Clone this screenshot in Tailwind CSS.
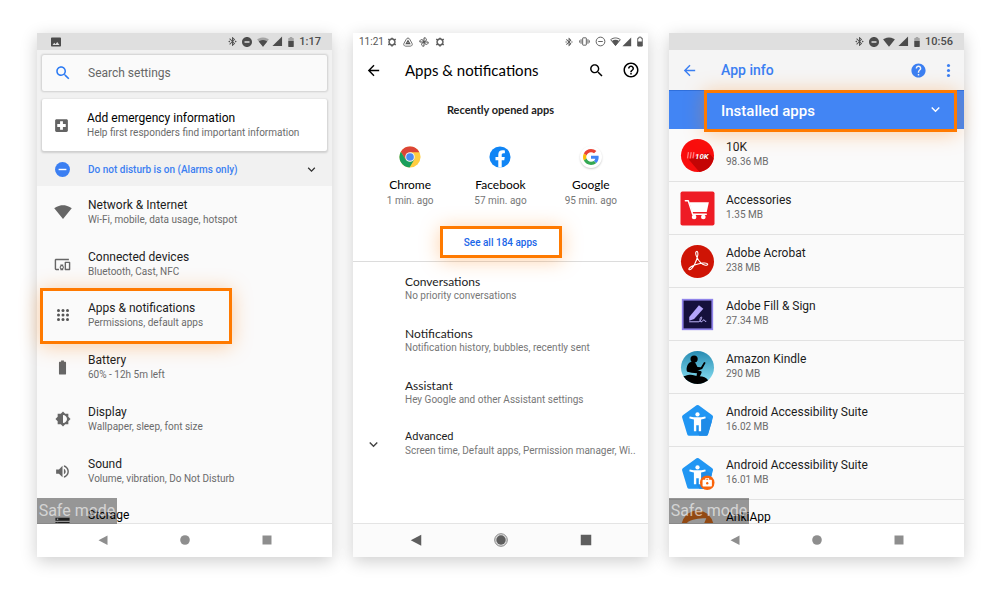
<!DOCTYPE html>
<html lang="en">
<head>
    <meta charset="UTF-8">
    <meta name="viewport" content="width=device-width, initial-scale=1.0">
    <title>Apps &amp; notifications</title>
    <script src="https://cdn.jsdelivr.net/npm/@tailwindcss/browser@4"></script>
</head>
<body class="bg-white font-['Roboto',sans-serif] text-[#1c1c1c]">
    <!-- Shared icons -->
    <svg class="hidden">
        <symbol id="bluetooth" viewBox="0 0 24 24"><path d="M7 12l-2-2-2 2 2 2 2-2zm10.71-4.29L12 2h-1v7.59L6.41 5 5 6.41 10.59 12 5 17.59 6.41 19 11 14.41V22h1l5.71-5.71-4.3-4.29 4.3-4.29zM13 5.83l1.88 1.88L13 9.59V5.83zm1.88 10.46L13 18.17v-3.76l1.88 1.88zM19 10l-2 2 2 2 2-2-2-2z"/></symbol>
        <symbol id="dnd" viewBox="0 0 24 24"><path d="M12 2C6.48 2 2 6.48 2 12s4.48 10 10 10 10-4.48 10-10S17.52 2 12 2zm5 11.5H7v-3h10v3z"/></symbol>
        <symbol id="wifi" viewBox="0 0 24 24"><path d="M12.01 21.49L23.64 7c-.45-.34-4.93-4-11.64-4C5.28 3 .81 6.66.36 7l11.65 14.49z"/></symbol>
        <symbol id="wifi-mid" viewBox="0 0 24 24"><path opacity=".4" d="M12.01 21.49L23.64 7c-.45-.34-4.93-4-11.64-4C5.28 3 .81 6.66.36 7l11.65 14.49z"/><path d="M12.01 21.49L20.5 10.9C20.1 10.6 16.8 8 12 8s-8.1 2.6-8.5 2.9z"/></symbol>
        <symbol id="signal" viewBox="0 0 24 24"><path d="M1 22h21V1z"/></symbol>
        <symbol id="battery" viewBox="0 0 24 24"><path d="M15.67 4H14V2h-4v2H8.33C7.6 4 7 4.6 7 5.33v15.33C7 21.4 7.6 22 8.33 22h7.33c.74 0 1.34-.6 1.34-1.33V5.33C17 4.6 16.4 4 15.67 4z"/></symbol>
        <symbol id="battery-mid" viewBox="0 0 12 24"><path opacity=".4" d="M10.500 4H8.500V2h-5v2h-2C1 4 .5 4.500.5 5v5h11V5c0-.5-.5-1-1-1z"/><path d="M.5 10v11c0 .5.5 1 1 1h9c.5 0 1-.5 1-1V10z"/></symbol>
        <symbol id="search" viewBox="0 0 24 24"><path d="M15.5 14h-.79l-.28-.27C15.41 12.59 16 11.11 16 9.5 16 5.91 13.09 3 9.5 3S3 5.91 3 9.5 5.91 16 9.5 16c1.61 0 3.09-.59 4.23-1.57l.27.28v.79l5 4.99L20.49 19l-4.99-5zm-6 0C7.01 14 5 11.99 5 9.5S7.01 5 9.5 5 14 7.01 14 9.5 11.99 14 9.5 14z"/></symbol>
        <symbol id="chevron" viewBox="0 0 24 24"><path d="M16.59 8.59L12 13.17 7.41 8.59 6 10l6 6 6-6z"/></symbol>
        <symbol id="arrow" viewBox="0 0 24 24"><path d="M20 11H7.83l5.59-5.59L12 4l-8 8 8 8 1.41-1.41L7.83 13H20v-2z"/></symbol>
        <symbol id="gear" viewBox="0 0 24 24"><path fill="none" stroke="currentColor" stroke-width="3" d="M8.500 5h7l4 7-4 7h-7l-4-7z"/><path d="M10 1.500h4V5h-4zM10 19h4v3.500h-4zM2 7l2-3.500 3.500 2-2 3.500zM22 7l-2-3.500-3.500 2 2 3.500zM2 17l2 3.500 3.500-2-2-3.500zM22 17l-2 3.500-3.500-2 2-3.500z"/></symbol>
        <symbol id="a11y" viewBox="0 0 36 36"><path fill="#2196f3" d="M17 2.400a2 2 0 0 1 2.200 0l14 10.200a2 2 0 0 1 .7 2.200l-5.200 17.500a2 2 0 0 1-1.900 1.400H9.400a2 2 0 0 1-1.900-1.400L2.200 14.800a2 2 0 0 1 .7-2.200z"/><path fill="#1e8be8" d="M27 15l5.800 4-4 13.300a2 2 0 0 1-2 1.400H20L17 29l5-12z"/><circle cx="18" cy="11.800" r="2.200" fill="#fff"/><path fill="#fff" d="M10 13.800c5 1.300 11 1.300 16 0l.5 2c-1.700.6-3.300 1-4.800 1.200V29h-2.400v-6h-2.600v6h-2.400V17c-1.500-.2-3.100-.6-4.800-1.200z"/></symbol>
        <symbol id="nav-back" viewBox="0 0 12 12"><path d="M10.500 1.500v9.500L1.500 6.200z"/></symbol>
        <symbol id="nav-home" viewBox="0 0 12 12"><circle cx="6" cy="6" r="4.800"/></symbol>
        <symbol id="nav-recent" viewBox="0 0 12 12"><path d="M1.500 1.500h9v9h-9z"/></symbol>
    </svg>

    <main class="grid h-screen grid-cols-3 gap-[21px] pt-[33px] pr-9 pb-8 pl-[37px]">
        <!-- Settings -->
        <section class="relative flex min-h-0 flex-col bg-[#fafafa] shadow-[0_4px_16px_rgba(0,0,0,0.2)]">
            <div class="flex h-[17px] shrink-0 items-center bg-[#dfdfdf] pr-[11px] pl-[13px] text-[#4c4c4c]">
                <svg class="size-3 fill-current" viewBox="0 0 24 24"><path d="M22 19V5c0-1.100-.9-2-2-2H4c-1.100 0-2 .9-2 2v14c0 1.100.9 2 2 2h16c1.100 0 2-.9 2-2zM8.500 13.500l2.500 3.010L14.500 12l4.500 6H5l3.500-4.500z"/></svg>
                <div class="ml-auto flex items-center gap-[3px]">
                    <svg class="size-[11px] fill-current"><use href="#bluetooth"/></svg>
                    <svg class="size-3 fill-current"><use href="#dnd"/></svg>
                    <svg class="ml-px size-3 fill-current"><use href="#wifi-mid"/></svg>
                    <svg class="size-[11px] fill-current"><use href="#signal"/></svg>
                    <svg class="mx-[2px] h-3 w-[6px] fill-current"><use href="#battery-mid"/></svg>
                    <span class="text-[11px] font-medium leading-none">1:17</span>
                </div>
            </div>

            <div class="shrink-0 bg-[#f1f1f1] pt-[5px]">
                <label class="mx-[5px] flex h-9 items-center gap-[5px] rounded-[2px] bg-[#fafafa] shadow-[0_0_2px_1px_rgba(0,0,0,0.14)]">
                    <span class="flex w-[41px] justify-center">
                        <svg class="size-[18px] fill-[#2b7af3]"><use href="#search"/></svg>
                    </span>
                    <input type="search" placeholder="Search settings" class="min-w-0 flex-1 bg-transparent text-xs outline-none placeholder:text-[#666]">
                </label>
                <a href="#" class="mx-[5px] mt-2 flex h-[52px] items-center gap-1 rounded-[2px] bg-white shadow-[0_1px_2px_1px_rgba(0,0,0,0.14)]">
                    <span class="flex w-[41px] justify-center pr-[3px]">
                        <svg class="size-[17px] fill-[#636363]" viewBox="0 0 24 24"><path d="M19 3H5c-1.100 0-2 .9-2 2v14c0 1.100.9 2 2 2h14c1.100 0 2-.9 2-2V5c0-1.100-.9-2-2-2zm-1 11h-4v4h-4v-4H6v-4h4V6h4v4h4v4z"/></svg>
                    </span>
                    <span>
                        <span class="block text-xs leading-[15px] text-black">Add emergency information</span>
                        <span class="block text-[10px] leading-[14px] text-[#6b6b6b]">Help first responders find important information</span>
                    </span>
                </a>
                <button class="mt-px flex h-[34px] w-full items-center pr-[13px] text-left">
                    <span class="flex w-[51px] justify-center">
                        <svg class="size-[17px]" viewBox="0 0 24 24"><circle cx="12" cy="12" r="10.500" fill="#3b7ff2"/><path fill="#fff" d="M6.500 11h11v2h-11z"/></svg>
                    </span>
                    <span class="text-[10px] font-medium text-[#3b7ff2]">Do not disturb is on (Alarms only)</span>
                    <svg class="ml-auto size-[15px] fill-[#333]"><use href="#chevron"/></svg>
                </button>
            </div>

            <nav class="min-h-0 flex-1 overflow-x-visible overflow-y-clip">
                <a href="#" class="flex h-[52px] items-center">
                    <span class="flex w-[51px] justify-center"><svg class="size-[18px] fill-[#666]"><use href="#wifi"/></svg></span>
                    <span>
                        <span class="block text-xs leading-[15px]">Network &amp; Internet</span>
                        <span class="block text-[10px] leading-[14px] text-[#6b6b6b]">Wi-Fi, mobile, data usage, hotspot</span>
                    </span>
                </a>
                <a href="#" class="flex h-[52px] items-center">
                    <span class="flex w-[51px] justify-center"><svg class="size-[17px] fill-[#666]" viewBox="0 0 24 24"><path d="M3 6h18V4H3c-1.100 0-2 .9-2 2v12c0 1.100.9 2 2 2h4v-2H3V6zm10 6H9v1.780c-.61.55-1 1.330-1 2.220s.39 1.670 1 2.220V20h4v-1.780c.61-.55 1-1.340 1-2.220s-.39-1.670-1-2.220V12zm-2 5.500c-.83 0-1.500-.67-1.500-1.500s.67-1.500 1.500-1.500 1.500.67 1.500 1.500-.67 1.500-1.500 1.500zM22 8h-6c-.5 0-1 .5-1 1v10c0 .5.5 1 1 1h6c.5 0 1-.5 1-1V9c0-.5-.5-1-1-1zm-1 10h-4v-8h4v8z"/></svg></span>
                    <span>
                        <span class="block text-xs leading-[15px]">Connected devices</span>
                        <span class="block text-[10px] leading-[14px] text-[#6b6b6b]">Bluetooth, Cast, NFC</span>
                    </span>
                </a>
                <a href="#" class="relative flex h-[52px] items-center pb-[2px]">
                    <span class="absolute -inset-y-[2px] left-[3px] w-48 border-3 border-[#ff7a00] shadow-[0_2px_20px_rgba(255,122,0,0.35)]"></span>
                    <span class="flex w-[51px] justify-center"><svg class="size-[18px] fill-[#555]" viewBox="0 0 24 24"><circle cx="6" cy="6" r="2"/><circle cx="12" cy="6" r="2"/><circle cx="18" cy="6" r="2"/><circle cx="6" cy="12" r="2"/><circle cx="12" cy="12" r="2"/><circle cx="18" cy="12" r="2"/><circle cx="6" cy="18" r="2"/><circle cx="12" cy="18" r="2"/><circle cx="18" cy="18" r="2"/></svg></span>
                    <span>
                        <span class="block text-xs leading-[15px]">Apps &amp; notifications</span>
                        <span class="block text-[10px] leading-[14px] text-[#6b6b6b]">Permissions, default apps</span>
                    </span>
                </a>
                <a href="#" class="flex h-[52px] items-center pb-[2px]">
                    <span class="flex w-[51px] justify-center"><svg class="size-[17px] fill-[#666]"><use href="#battery"/></svg></span>
                    <span>
                        <span class="block text-xs leading-[15px]">Battery</span>
                        <span class="block text-[10px] leading-[14px] text-[#6b6b6b]">60% - 12h 5m left</span>
                    </span>
                </a>
                <a href="#" class="flex h-[52px] items-center pb-[2px]">
                    <span class="flex w-[51px] justify-center"><svg class="size-4 fill-[#666]" viewBox="0 0 24 24"><path d="M20 15.310L23.310 12 20 8.690V4h-4.690L12 .69 8.690 4H4v4.690L.69 12 4 15.310V20h4.690L12 23.310 15.310 20H20v-4.690zM12 18V6c3.310 0 6 2.690 6 6s-2.690 6-6 6z"/></svg></span>
                    <span>
                        <span class="block text-xs leading-[15px]">Display</span>
                        <span class="block text-[10px] leading-[14px] text-[#6b6b6b]">Wallpaper, sleep, font size</span>
                    </span>
                </a>
                <a href="#" class="flex h-[52px] items-center pb-[2px]">
                    <span class="flex w-[51px] justify-center"><svg class="size-[17px] fill-[#666]" viewBox="0 0 24 24"><path d="M3 9v6h4l5 5V4L7 9H3zm13.500 3c0-1.770-1.020-3.290-2.500-4.030v8.050c1.480-.73 2.500-2.250 2.500-4.020zM14 3.230v2.060c2.890.86 5 3.540 5 6.710s-2.110 5.850-5 6.710v2.060c4.010-.91 7-4.490 7-8.770s-2.990-7.860-7-8.770z"/></svg></span>
                    <span>
                        <span class="block text-xs leading-[15px]">Sound</span>
                        <span class="block text-[10px] leading-[14px] text-[#6b6b6b]">Volume, vibration, Do Not Disturb</span>
                    </span>
                </a>
                <a href="#" class="flex h-[52px] items-center pb-[2px]">
                    <span class="flex w-[51px] justify-center"><svg class="size-[17px] fill-[#333]" viewBox="0 0 24 24"><path d="M2 20h20v-4H2v4zm2-3h2v2H4v-2zM2 4v4h20V4H2zm4 3H4V5h2v2zm-4 7h20v-4H2v4zm2-3h2v2H4v-2z"/></svg></span>
                    <span class="pb-4 text-xs leading-[15px] text-black">Storage</span>
                </a>
            </nav>

            <div class="relative flex h-[34px] shrink-0 items-center justify-center gap-[70px] border-t border-[#e4e4e4] bg-white pb-px text-[#8e8e8e]">
                <span class="absolute bottom-full left-0 w-20 bg-black/40 text-center text-base leading-[26px] whitespace-nowrap text-white/60">Safe mode</span>
                <button aria-label="Back"><svg class="size-3 fill-current"><use href="#nav-back"/></svg></button>
                <button aria-label="Home"><svg class="size-3 fill-current"><use href="#nav-home"/></svg></button>
                <button aria-label="Recents"><svg class="size-3 fill-current"><use href="#nav-recent"/></svg></button>
            </div>
        </section>

        <!-- Apps & notifications -->
        <section class="flex min-h-0 flex-col bg-white shadow-[0_4px_16px_rgba(0,0,0,0.2)]">
            <div class="flex h-[17px] shrink-0 items-center pr-1 pl-[6px] text-[#555]">
                <span class="mr-[3px] text-[10px] leading-none">11:21</span>
                <div class="flex items-center gap-[6px]">
                    <svg class="size-[10px] fill-current"><use href="#gear"/></svg>
                    <svg class="size-[10px]" viewBox="0 0 24 24" fill="none" stroke="currentColor" stroke-width="2"><path d="M8 5a4.500 4.500 0 0 1 8 0l5.500 10a4.500 4.500 0 0 1-4 7h-11a4.500 4.500 0 0 1-4-7z"/><path stroke-width="3" d="M12 9l4 7H8z"/></svg>
                    <svg class="size-[10px]" viewBox="0 0 24 24" fill="none" stroke="currentColor" stroke-width="2.400"><path d="M12 12V2c5-1 7 4 5 7zM12 12h10c1 5-4 7-7 5zM12 12v10c-5 1-7-4-5-7zM12 12H2C1 7 6 5 9 7z"/></svg>
                    <svg class="size-[10px] fill-current"><use href="#gear"/></svg>
                </div>
                <div class="ml-auto flex items-center">
                    <svg class="mr-[5px] size-[10px] fill-current"><use href="#bluetooth"/></svg>
                    <svg class="mr-[5px] size-[11px]" viewBox="0 0 24 24" fill="none" stroke="currentColor" stroke-width="2"><rect x="8" y="4" width="8" height="16" rx="1"/><path d="M4.500 7v10M19.500 7v10M1.500 9.500v5M22.500 9.500v5"/></svg>
                    <svg class="mr-[4px] size-[11px]" viewBox="0 0 24 24" fill="none" stroke="currentColor" stroke-width="2"><circle cx="12" cy="12" r="9.500"/><path d="M7 12h10"/></svg>
                    <svg class="mr-px size-[11px]" viewBox="0 0 24 24"><path fill="none" stroke="currentColor" stroke-width="2" d="M1.500 8C8 3 16 3 22.500 8L12 21z"/><path fill="currentColor" d="M12 21.500L20 11c-5-3.500-11-3.500-16 0z"/></svg>
                    <svg class="mr-[4px] size-[10px] fill-current"><use href="#signal"/></svg>
                    <svg class="h-[11px] w-2" viewBox="0 0 16 24"><path fill="none" stroke="currentColor" stroke-width="2" d="M3 5h2.500V2.500h5V5H13v17H3z"/><path fill="currentColor" d="M3 12h10v10H3z"/></svg>
                </div>
            </div>

            <header class="flex h-10 shrink-0 items-center pr-2 pl-3 text-black">
                <button aria-label="Navigate up"><svg class="size-[17px] fill-current"><use href="#arrow"/></svg></button>
                <h1 class="ml-[23px] font-['Lato',sans-serif] text-[15px]">Apps &amp; notifications</h1>
                <button aria-label="Search" class="ml-auto"><svg class="size-[17px] fill-current"><use href="#search"/></svg></button>
                <button aria-label="Help" class="ml-[17px]"><svg class="size-[18px] fill-current" viewBox="0 0 24 24"><path d="M11 18h2v-2h-2v2zm1-16C6.480 2 2 6.480 2 12s4.480 10 10 10 10-4.480 10-10S17.520 2 12 2zm0 18c-4.410 0-8-3.590-8-8s3.590-8 8-8 8 3.590 8 8-3.590 8-8 8zm0-14c-2.210 0-4 1.790-4 4h2c0-1.100.9-2 2-2s2 .9 2 2c0 2-3 1.750-3 5h2c0-2.250 3-2.500 3-5 0-2.210-1.790-4-4-4z"/></svg></button>
            </header>

            <div class="flex shrink-0 flex-col items-center border-b border-[#dcdcdc] pt-[13px] pb-[3px]">
                <h2 class="font-['Lato',sans-serif] text-[11px] leading-[14px] font-bold text-[#222]">Recently opened apps</h2>
                <div class="mt-[29px] grid w-full grid-cols-3 px-3 text-center">
                    <a href="#" class="flex flex-col items-center">
                        <svg class="size-[22px]" viewBox="0 0 48 48"><circle cx="24" cy="24" r="23" fill="#ffcd41"/><path fill="#dc4437" d="M24 1A23 23 0 0 0 4 12.600L14.500 30 24 13.500h20.500A23 23 0 0 0 24 1z"/><path fill="#1a9f5c" d="M4 12.600A23 23 0 0 0 23 47l10.500-17.500L24 34.500l-9.500-5z"/><circle cx="24" cy="24" r="10.500" fill="#f1f1f1"/><circle cx="24" cy="24" r="8.300" fill="#4a8af4"/></svg>
                        <span class="mt-[9px] font-['Lato',sans-serif] text-xs leading-4 text-black">Chrome</span>
                        <span class="text-[10px] leading-4 text-[#777]">1 min. ago</span>
                    </a>
                    <a href="#" class="flex flex-col items-center">
                        <svg class="size-[22px]" viewBox="0 0 24 24"><circle cx="12" cy="12" r="11.500" fill="#1085f5"/><path fill="#fff" d="M10.130 23.300v-7.740H7.080v-3.490h3.040V9.410c0-3.020 1.800-4.700 4.540-4.700 1.310 0 2.680.24 2.680.24v2.970h-1.500c-1.500 0-1.960.93-1.960 1.890v2.260h3.320l-.53 3.490h-2.800v7.740c-1.250.3-2.500.3-3.740 0z"/></svg>
                        <span class="mt-[9px] font-['Lato',sans-serif] text-xs leading-4 text-black">Facebook</span>
                        <span class="text-[10px] leading-4 text-[#777]">57 min. ago</span>
                    </a>
                    <a href="#" class="flex flex-col items-center">
                        <span class="flex size-[22px] items-center justify-center rounded-full bg-white shadow-[0_1px_2px_rgba(0,0,0,0.2)]">
                            <svg class="size-4" viewBox="0 0 48 48"><path fill="#ea4335" d="M24 9.500c3.540 0 6.710 1.220 9.210 3.600l6.850-6.850C35.900 2.380 30.470 0 24 0 14.620 0 6.510 5.380 2.560 13.220l7.980 6.190C12.430 13.720 17.740 9.500 24 9.500z"/><path fill="#4285f4" d="M46.980 24.550c0-1.570-.15-3.090-.38-4.550H24v9.020h12.940c-.58 2.960-2.260 5.480-4.780 7.180l7.730 6c4.510-4.180 7.090-10.360 7.090-17.650z"/><path fill="#fbbc05" d="M10.530 28.590c-.48-1.450-.76-2.990-.76-4.590s.27-3.140.76-4.590l-7.980-6.190C.92 16.460 0 20.120 0 24c0 3.880.92 7.540 2.560 10.780l7.970-6.190z"/><path fill="#34a853" d="M24 48c6.480 0 11.930-2.130 15.890-5.810l-7.730-6c-2.150 1.450-4.920 2.300-8.160 2.300-6.260 0-11.570-4.220-13.470-9.910l-7.980 6.190C6.510 42.620 14.620 48 24 48z"/></svg>
                        </span>
                        <span class="mt-[9px] font-['Lato',sans-serif] text-xs leading-4 text-black">Google</span>
                        <span class="text-[10px] leading-4 text-[#777]">95 min. ago</span>
                    </a>
                </div>
                <button class="mt-[17px] h-8 w-[122px] border-3 border-[#ff7a00] text-[10px] font-medium text-[#1a66e8] shadow-[0_2px_20px_rgba(255,122,0,0.35)]">See all 184 apps</button>
            </div>

            <nav class="min-h-0 flex-1 overflow-hidden">
                <a href="#" class="flex h-[52px] flex-col justify-center pl-[52px]">
                    <span class="font-['Lato',sans-serif] text-xs leading-[15px]">Conversations</span>
                    <span class="text-[10px] leading-[14px] text-[#777]">No priority conversations</span>
                </a>
                <a href="#" class="flex h-[52px] flex-col justify-center pl-[52px]">
                    <span class="font-['Lato',sans-serif] text-xs leading-[15px]">Notifications</span>
                    <span class="text-[10px] leading-[14px] text-[#777]">Notification history, bubbles, recently sent</span>
                </a>
                <a href="#" class="flex h-[52px] flex-col justify-center pl-[52px]">
                    <span class="font-['Lato',sans-serif] text-xs leading-[15px]">Assistant</span>
                    <span class="text-[10px] leading-[14px] text-[#777]">Hey Google and other Assistant settings</span>
                </a>
                <button class="flex h-[52px] w-full items-center pl-3 text-left">
                    <svg class="mr-[23px] size-[17px] shrink-0 fill-[#444]"><use href="#chevron"/></svg>
                    <span>
                        <span class="block text-[11px] leading-[14px]">Advanced</span>
                        <span class="block text-[10px] leading-[14px] whitespace-nowrap text-[#777]">Screen time, Default apps, Permission manager, Wi..</span>
                    </span>
                </button>
            </nav>

            <div class="flex h-[34px] shrink-0 items-center justify-center gap-[71px] border-t border-[#e4e4e4] bg-[#fbfbfb] pb-px text-[#5e5e5e]">
                <button aria-label="Back"><svg class="size-[14px] fill-current"><use href="#nav-back"/></svg></button>
                <button aria-label="Home"><svg class="size-[14px]" viewBox="0 0 14 14"><circle cx="7" cy="7" r="6.300" fill="#ddd" stroke="#888"/><circle cx="7" cy="7" r="4.700" fill="#5e5e5e"/></svg></button>
                <button aria-label="Recents"><svg class="size-[14px] fill-current"><use href="#nav-recent"/></svg></button>
            </div>
        </section>

        <!-- App info -->
        <section class="flex min-h-0 flex-col bg-[#fafafa] shadow-[0_4px_16px_rgba(0,0,0,0.2)]">
            <div class="flex h-[17px] shrink-0 items-center justify-end gap-[3px] bg-[#dfdfdf] pr-[11px] text-[#4c4c4c]">
                <svg class="size-[11px] fill-current"><use href="#bluetooth"/></svg>
                <svg class="size-3 fill-current"><use href="#dnd"/></svg>
                <svg class="size-3 fill-current"><use href="#wifi"/></svg>
                <svg class="size-[11px] fill-current"><use href="#signal"/></svg>
                <svg class="mx-[2px] h-3 w-[6px] fill-current"><use href="#battery-mid"/></svg>
                <span class="text-[11px] font-medium leading-none">10:56</span>
            </div>

            <header class="flex h-10 shrink-0 items-center bg-[#f5f5f5] pr-[7px] pl-3 text-[#3b7ff2]">
                <button aria-label="Navigate up"><svg class="size-[17px] fill-current"><use href="#arrow"/></svg></button>
                <h1 class="ml-[23px] text-sm font-medium">App info</h1>
                <button aria-label="Help" class="ml-auto"><svg class="size-[17px] fill-current" viewBox="0 0 24 24"><path d="M12 2C6.480 2 2 6.480 2 12s4.480 10 10 10 10-4.480 10-10S17.520 2 12 2zm1 17h-2v-2h2v2zm2.070-7.750l-.9.92C13.450 12.900 13 13.500 13 15h-2v-.5c0-1.100.45-2.100 1.170-2.830l1.240-1.260c.37-.36.59-.86.59-1.410 0-1.100-.9-2-2-2s-2 .9-2 2H8c0-2.210 1.790-4 4-4s4 1.790 4 4c0 .88-.36 1.680-.93 2.250z"/></svg></button>
                <button aria-label="More options" class="ml-[13px]"><svg class="size-[17px] fill-current" viewBox="0 0 24 24"><circle cx="12" cy="5" r="2.200"/><circle cx="12" cy="12" r="2.200"/><circle cx="12" cy="19" r="2.200"/></svg></button>
            </header>

            <div class="relative z-10 h-[39px] shrink-0 border-t border-[#2f6fdc] bg-[#4285f4]">
                <div class="absolute -top-px right-[7px] -bottom-[3px] left-[35px] border-3 border-[#ff7a00] bg-[#4285f4] shadow-[0_2px_20px_rgba(255,122,0,0.35)]">
                    <select aria-label="Filter apps" class="h-full w-full appearance-none bg-transparent pl-[14px] text-[15px] font-medium text-white outline-none">
                        <option>Installed apps</option>
                        <option>All apps</option>
                    </select>
                    <svg class="pointer-events-none absolute top-2 right-[10px] size-[17px] fill-white"><use href="#chevron"/></svg>
                </div>
            </div>

            <ul class="min-h-0 flex-1 overflow-hidden">
                <li class="flex h-[53px] items-center gap-[11px] border-b border-[#e2e2e2] pl-[11px]">
                    <svg class="size-[35px]" viewBox="0 0 36 36"><circle cx="18" cy="18" r="17" fill="#f90d0d"/><path fill="#c40505" d="M29 15l5.600 5.500A17 17 0 0 1 20 34.900L9 22z"/><path stroke="#ff7d7d" stroke-width="1.300" d="M8.700 14.500l-1 6.500M11.500 14.500l-1 6.500M14.300 14.500l-1 6.500"/><text x="15.500" y="21.300" fill="#fff" font-size="8" font-weight="700" font-style="italic" font-family="Roboto, sans-serif">10K</text></svg>
                    <div class="pb-[2px]">
                        <p class="text-xs leading-[15px]">10K</p>
                        <p class="text-[10px] leading-[14px] text-[#6b6b6b]">98.36 MB</p>
                    </div>
                </li>
                <li class="flex h-[53px] items-center gap-[11px] border-b border-[#e2e2e2] pl-[11px]">
                    <svg class="size-[35px]" viewBox="0 0 36 36"><rect x=".5" y=".5" width="35" height="35" rx="2" fill="#ee1c25"/><path fill="#fff" d="M9.500 11.500h20.200L27.500 21.500H12.500z"/><path fill="none" stroke="#fff" stroke-width="1.500" stroke-linecap="round" stroke-linejoin="round" d="M5.500 10h3l4.500 14h14"/><circle cx="14.500" cy="26.700" r="2.400" fill="#fff"/><circle cx="24" cy="26.700" r="2.400" fill="#fff"/></svg>
                    <div class="pb-[2px]">
                        <p class="text-xs leading-[15px]">Accessories</p>
                        <p class="text-[10px] leading-[14px] text-[#6b6b6b]">1.35 MB</p>
                    </div>
                </li>
                <li class="flex h-[53px] items-center gap-[11px] border-b border-[#e2e2e2] pl-[11px]">
                    <svg class="size-[35px]" viewBox="0 0 36 36"><circle cx="18" cy="18" r="17" fill="#cf1405"/><path fill="none" stroke="#fff" stroke-width="1.100" stroke-linejoin="round" d="M16.300 8.500c1.200-2 2.500-.5 2 3-.8 5-4.800 14.500-8.300 15-2 .2-.8-3 5-5 5.500-1.800 13-3 13.500-.8.300 1.800-4.500 1.600-7.500-1.700-3-3.200-5.500-8.700-4.700-10.500z"/></svg>
                    <div class="pb-[2px]">
                        <p class="text-xs leading-[15px]">Adobe Acrobat</p>
                        <p class="text-[10px] leading-[14px] text-[#6b6b6b]">238 MB</p>
                    </div>
                </li>
                <li class="flex h-[53px] items-center gap-[11px] border-b border-[#e2e2e2] pl-[11px]">
                    <svg class="size-[35px]" viewBox="0 0 36 36"><rect x="2.800" y="2.800" width="30.400" height="30.400" fill="#15103c" stroke="#8f83ea" stroke-width="1.800"/><path fill="#b3a5fb" d="M9.500 20.500L19.500 8.500l4.500 3.500L14.500 22.500l-5 2z"/><path stroke="#c4baff" stroke-width="1" fill="none" d="M9.500 25.500h10c2-1 3.500-4.500 2.500-5s-2.500 4.500-.5 5 1.500-2 3-2 0 2 2.500 1.500"/></svg>
                    <div class="pb-[2px]">
                        <p class="text-xs leading-[15px]">Adobe Fill &amp; Sign</p>
                        <p class="text-[10px] leading-[14px] text-[#6b6b6b]">27.34 MB</p>
                    </div>
                </li>
                <li class="flex h-[53px] items-center gap-[11px] border-b border-[#e2e2e2] pl-[11px]">
                    <svg class="size-[35px]" viewBox="0 0 36 36"><defs><linearGradient id="sky" x2="0" y2="1"><stop offset="0" stop-color="#2488b0"/><stop offset="1" stop-color="#8fe6f7"/></linearGradient><clipPath id="disc"><circle cx="18" cy="18" r="17"/></clipPath></defs><g clip-path="url(#disc)"><path fill="url(#sky)" d="M0 0h36v36H0z"/><circle cx="14.500" cy="9.300" r="3.700"/><path d="M9.500 13c2.500-1.500 5.500-1 6.500.5l2 4 3.500.3 3.300-5.500 1.600.9-3.600 6.300-4.300 1.500-2-.2 4.500.7c1.300.3 1.500 1.300 1 2.300L19.500 29h-3l1-5-5.500-.5-4.500-1.200c-1.500-2-.5-7 2-9.300z"/><path d="M0 28.500c5-1.500 7-3 11-3 3 0 5 1.500 9 1.500s7 1.500 9 4l2 5H0z"/></g></svg>
                    <div class="pb-[2px]">
                        <p class="text-xs leading-[15px]">Amazon Kindle</p>
                        <p class="text-[10px] leading-[14px] text-[#6b6b6b]">290 MB</p>
                    </div>
                </li>
                <li class="flex h-[53px] items-center gap-[11px] border-b border-[#e2e2e2] pl-[11px]">
                    <svg class="size-[35px]"><use href="#a11y"/></svg>
                    <div class="pb-[2px]">
                        <p class="text-xs leading-[15px]">Android Accessibility Suite</p>
                        <p class="text-[10px] leading-[14px] text-[#6b6b6b]">16.02 MB</p>
                    </div>
                </li>
                <li class="flex h-[53px] items-center gap-[11px] border-b border-[#e2e2e2] pl-[11px]">
                    <svg class="size-[35px]" viewBox="0 0 36 36"><use href="#a11y"/><circle cx="28" cy="27.500" r="7.500" fill="#f9640c"/><path fill="#fff" d="M26 24.500v-1.300c0-.4.300-.7.700-.7h2.600c.4 0 .7.300.7.700v1.300h2c.5 0 .8.300.8.800v5.200c0 .5-.3.800-.8.800h-8c-.5 0-.8-.3-.8-.8v-5.200c0-.5.3-.8.8-.8zm1-1v1h2v-1z"/><circle cx="28" cy="28" r="1.200" fill="#f9640c"/></svg>
                    <div class="pb-[2px]">
                        <p class="text-xs leading-[15px]">Android Accessibility Suite</p>
                        <p class="text-[10px] leading-[14px] text-[#6b6b6b]">16.01 MB</p>
                    </div>
                </li>
                <li class="flex h-[53px] items-center gap-[11px] pl-[11px]">
                    <svg class="size-[35px]" viewBox="0 0 36 36"><circle cx="18" cy="18" r="16.500" fill="#f47a20"/><path fill="#fff" d="M7 14c5-3.500 12-4.500 20-4.500L21 24l-3.500-8z"/></svg>
                    <p class="pb-[18px] text-xs leading-[15px] text-black">AnkiApp</p>
                </li>
            </ul>

            <div class="relative flex h-[34px] shrink-0 items-center justify-center gap-[70px] border-t border-[#e4e4e4] bg-white pb-px text-[#8e8e8e]">
                <span class="absolute bottom-full left-0 w-20 bg-black/40 text-center text-base leading-[26px] whitespace-nowrap text-white/60">Safe mode</span>
                <button aria-label="Back"><svg class="size-3 fill-current"><use href="#nav-back"/></svg></button>
                <button aria-label="Home"><svg class="size-3 fill-current"><use href="#nav-home"/></svg></button>
                <button aria-label="Recents"><svg class="size-3 fill-current"><use href="#nav-recent"/></svg></button>
            </div>
        </section>
    </main>
</body>
</html>
